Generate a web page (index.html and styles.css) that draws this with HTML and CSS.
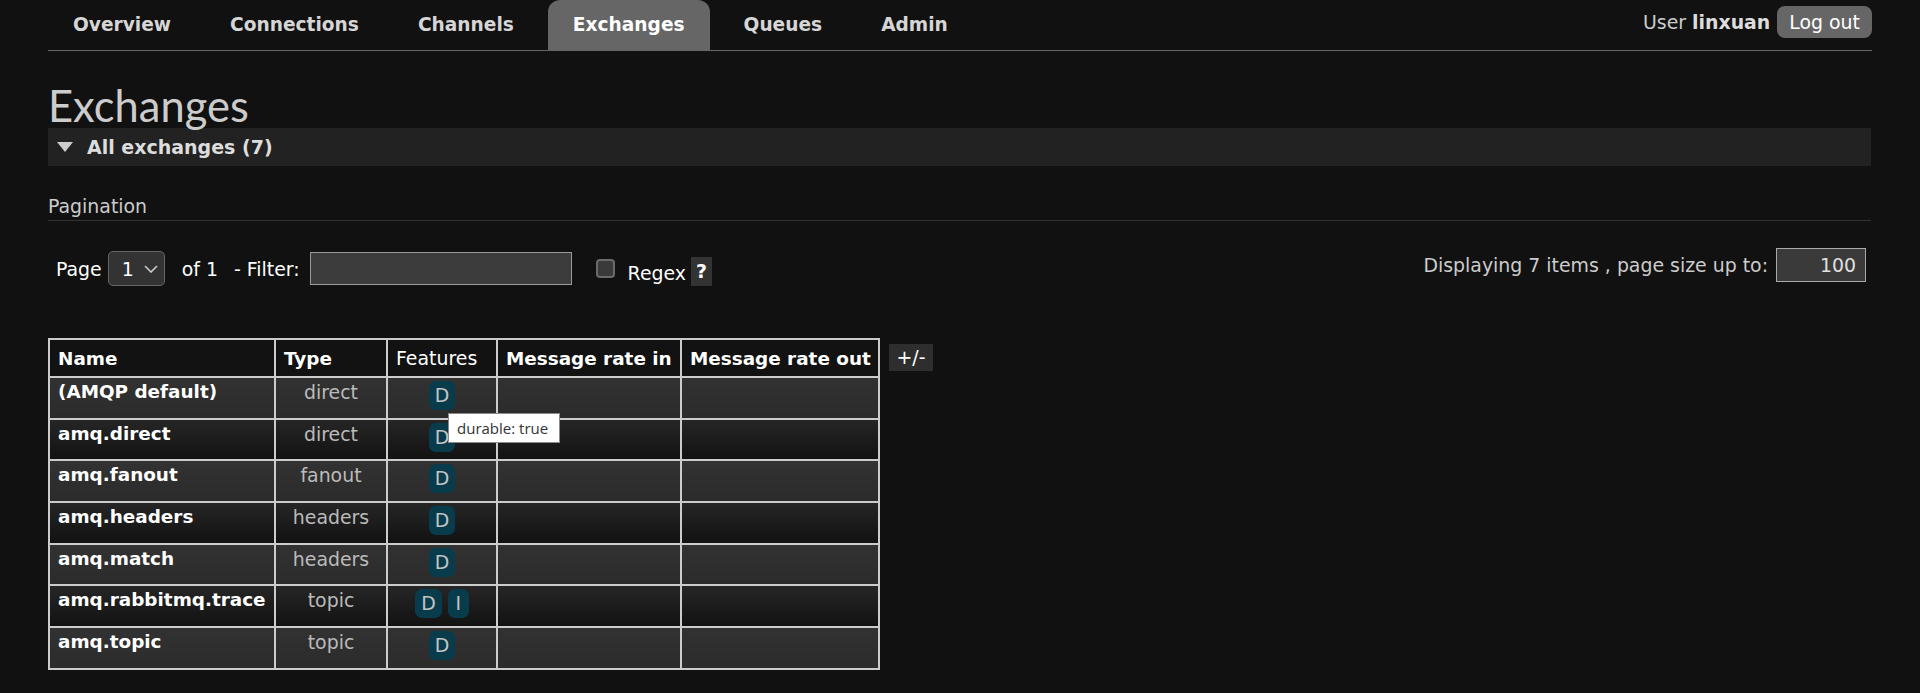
FILE: index.html
```html
<!DOCTYPE html>
<html lang="en">
<head>
<meta charset="utf-8">
<title>RabbitMQ Management</title>
<link rel="stylesheet" href="styles.css">
</head>
<body>
<header class="topbar">
  <nav class="menu">
    <a class="tab">Overview</a>
    <a class="tab">Connections</a>
    <a class="tab">Channels</a>
    <a class="tab active">Exchanges</a>
    <a class="tab">Queues</a>
    <a class="tab">Admin</a>
  </nav>
  <div class="login">
    <span class="user">User <b>linxuan</b></span>
    <button class="logout">Log out</button>
  </div>
</header>
<main class="main">
  <h1 class="title">Exchanges</h1>
  <section class="section">
    <h2 class="section-head"><span class="tri"></span>All exchanges (7)</h2>
    <h3 class="subhead">Pagination</h3>
    <div class="pager">
      <div class="pager-left">
        <span class="lbl">Page</span>
        <span class="select-wrap">
          <select class="select"><option>1</option></select>
          <svg class="chev" width="14" height="8" viewBox="0 0 14 8"><path d="M1 1 L7 7 L13 1" fill="none" stroke="#ccc" stroke-width="1.6"/></svg>
        </span>
        <span class="lbl of">of 1</span>
        <span class="lbl filter-lbl">- Filter:</span>
        <input class="filter" type="text">
        <span class="check"></span>
        <span class="lbl regex">Regex</span>
        <span class="help">?</span>
      </div>
      <div class="pager-right">
        <span class="display-txt">Displaying 7 items , page size up to:</span>
        <input class="pagesize" type="text" value="100">
      </div>
    </div>
    <div class="list-wrap">
      <table class="list">
        <thead>
          <tr>
            <th class="c-name">Name</th>
            <th class="c-type">Type</th>
            <th class="c-feat plain">Features</th>
            <th class="c-in">Message rate in</th>
            <th class="c-out">Message rate out</th>
          </tr>
        </thead>
        <tbody>
          <tr class="alt1"><td class="name">(AMQP default)</td><td class="type">direct</td><td class="feat"><span class="badge">D</span></td><td></td><td></td></tr>
          <tr class="alt2"><td class="name">amq.direct</td><td class="type">direct</td><td class="feat"><span class="badge">D</span></td><td></td><td></td></tr>
          <tr class="alt1"><td class="name">amq.fanout</td><td class="type">fanout</td><td class="feat"><span class="badge">D</span></td><td></td><td></td></tr>
          <tr class="alt2"><td class="name">amq.headers</td><td class="type">headers</td><td class="feat"><span class="badge">D</span></td><td></td><td></td></tr>
          <tr class="alt1"><td class="name">amq.match</td><td class="type">headers</td><td class="feat"><span class="badge">D</span></td><td></td><td></td></tr>
          <tr class="alt2"><td class="name">amq.rabbitmq.trace</td><td class="type">topic</td><td class="feat"><span class="badge">D</span> <span class="badge">I</span></td><td></td><td></td></tr>
          <tr class="alt1"><td class="name">amq.topic</td><td class="type">topic</td><td class="feat"><span class="badge">D</span></td><td></td><td></td></tr>
        </tbody>
      </table>
      <span class="toggle">+/-</span>
      <div class="tooltip">durable: true</div>
    </div>
  </section>
</main>
</body>
</html>
```

FILE: styles.css
```css
* { box-sizing: border-box; }
html, body { margin: 0; padding: 0; }
body {
  background: #111;
  color: #ccc;
  font-family: "DejaVu Sans", Verdana, sans-serif;
  font-size: 18.9px;
}

/* top bar */
.topbar {
  display: flex;
  justify-content: space-between;
  align-items: flex-start;
  height: 51px;
  margin: 0 48px;
  border-bottom: 1px solid #666;
}
.menu { display: flex; gap: 9px; }
.tab {
  display: block;
  height: 50px;
  line-height: 50px;
  padding: 0 25px;
  font-weight: bold;
  font-size: 18.6px;
  color: #d6d6d6;
  border-radius: 12px 12px 0 0;
}
.tab.active { background: #666; color: #fff; }
.login {
  display: flex;
  align-items: center;
  gap: 7px;
  margin-top: 6px;
  height: 32px;
}
.user { color: #ccc; }
.user b { color: #ddd; }
.logout {
  height: 32px;
  padding: 0 12px;
  background: #666;
  color: #fff;
  border: 0;
  border-radius: 8px;
  font-family: "DejaVu Sans", Verdana, sans-serif;
  font-size: 18.9px;
}

/* main */
.main { padding: 0 49px 0 48px; }
.title {
  margin: 31px 0 0;
  font-family: Lato, "Open Sans", sans-serif;
  font-weight: 400;
  font-size: 43.5px;
  line-height: 46px;
  color: #ccc;
}
.section-head {
  margin: 0;
  height: 38px;
  display: flex;
  align-items: center;
  background: #222;
  padding-left: 9px;
  font-size: 19px;
  font-weight: bold;
  color: #ddd;
}
.tri {
  width: 0;
  height: 0;
  border-left: 8px solid transparent;
  border-right: 8px solid transparent;
  border-top: 10px solid #ccc;
  margin-right: 14px;
}
.subhead {
  margin: 29px 0 0;
  font-size: 18.9px;
  font-weight: normal;
  line-height: 22px;
  padding-bottom: 3px;
  border-bottom: 1px solid #333;
  color: #ccc;
}

/* pager */
.pager {
  display: flex;
  justify-content: space-between;
  align-items: flex-start;
  margin-top: 27px;
}
.pager-left {
  display: flex;
  align-items: center;
  height: 35px;
  margin-top: 3px;
  padding-left: 8px;
  color: #fff;
}
.lbl { white-space: nowrap; }
.select-wrap {
  position: relative;
  margin-left: 6px;
  width: 57px;
  height: 35px;
}
.select {
  appearance: none;
  -webkit-appearance: none;
  width: 57px;
  height: 35px;
  padding: 0 0 0 13px;
  background: #333;
  color: #fff;
  border: 1px solid #666;
  border-radius: 5px;
  font-family: "DejaVu Sans", Verdana, sans-serif;
  font-size: 18.9px;
}
.chev { position: absolute; left: 36px; top: 14px; pointer-events: none; }
.of { margin-left: 17px; }
.filter-lbl { margin-left: 16px; }
.filter {
  margin-left: 10px;
  width: 262px;
  height: 33px;
  background: #3c3c3c;
  border: 1px solid #9a9a9a;
  color: #fff;
  font-size: 18px;
}
.check {
  margin-left: 24px;
  width: 19px;
  height: 19px;
  background: #3a3a3a;
  border: 2px solid #6a6a6a;
  border-radius: 4px;
}
.regex { margin-left: 13px; margin-top: 8px; }
.help {
  margin-left: 5px;
  margin-top: 6px;
  width: 21px;
  height: 29px;
  line-height: 29px;
  text-align: center;
  background: #333;
  color: #fff;
  font-weight: bold;
}
.pager-right {
  display: flex;
  align-items: center;
  gap: 8px;
  height: 34px;
  margin-right: 5px;
}
.display-txt { color: #ccc; white-space: nowrap; }
.pagesize {
  width: 90px;
  height: 34px;
  background: #3a3a3a;
  border: 1px solid #aaa;
  color: #e0e0e0;
  text-align: right;
  padding-right: 9px;
  font-family: "DejaVu Sans", Verdana, sans-serif;
  font-size: 18.9px;
}

/* table */
.list-wrap {
  position: relative;
  display: flex;
  align-items: flex-start;
  margin-top: 52px;
}
.list {
  border-collapse: collapse;
  table-layout: fixed;
  width: 830px;
  border: 2px solid #ccc;
  font-size: 18.4px;
}
.list th, .list td {
  border: 2px solid #ccc;
  padding: 0 8px;
}
.list th {
  height: 38px;
  background: #121212;
  color: #fff;
  text-align: left;
  font-weight: bold;
  white-space: nowrap;
}
.list th.plain { font-weight: normal; font-size: 18.9px; }
.c-name { width: 226px; }
.c-type { width: 112px; }
.c-feat { width: 110px; }
.c-in { width: 184px; }
.c-out { width: 198px; }
.list td {
  height: 41.7px;
  padding-top: 3px;
  vertical-align: top;
  line-height: 22px;
}
.list td.type, .list td.feat { font-size: 18.9px; }
.list tr.alt1 td { background: linear-gradient(#323232, #2b2b2b); }
.list tr.alt2 td { background: linear-gradient(#262626, #121212); }
.name { color: #fff; font-weight: bold; white-space: nowrap; }
.type { color: #bbb; text-align: center; }
.feat { text-align: center; }
.badge {
  display: inline-block;
  min-width: 21px;
  height: 29px;
  line-height: 29px;
  padding: 0 6px;
  border-radius: 7px;
  background: #083c4d;
  color: #c4c4c4;
  text-align: center;
  vertical-align: top;
}
.toggle {
  margin: 6px 0 0 9px;
  width: 44px;
  height: 27px;
  line-height: 27px;
  text-align: center;
  background: #2e2e2e;
  color: #fff;
}
.tooltip {
  position: absolute;
  left: 400px;
  top: 75px;
  width: 112px;
  height: 30px;
  line-height: 28px;
  padding-left: 8px;
  background: #fff;
  border: 1px solid #8a8a8a;
  color: #333;
  font-family: "Open Sans", sans-serif;
  font-size: 15px;
  white-space: nowrap;
}
```
